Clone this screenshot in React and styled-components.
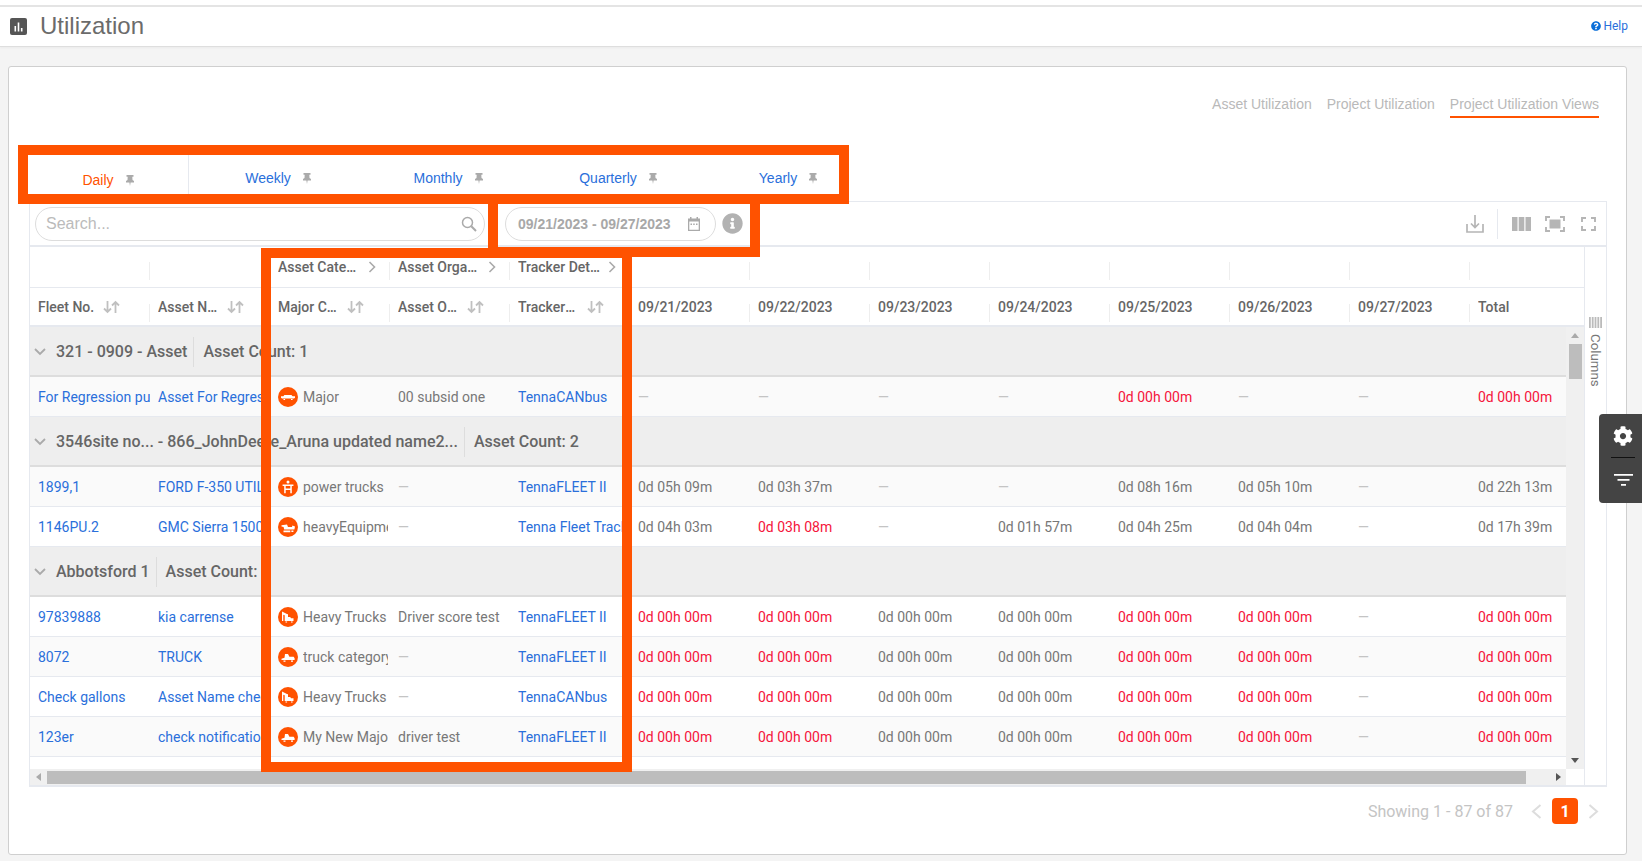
import React from 'react'
import styled, { createGlobalStyle } from 'styled-components'
import { FaCog, FaInfoCircle, FaQuestionCircle } from 'react-icons/fa'

const ORANGE = '#ff5200'
const BLUE = '#2a6fdb'
const LINE = '#e6e9ef'
const ARIAL = '"Liberation Sans", Arial, sans-serif'

const leafCols = [
  { label: 'Fleet No.', sort: true },
  { label: 'Asset Name', sort: true },
  { label: 'Major Category', sort: true },
  { label: 'Asset Organization', sort: true },
  { label: 'Tracker Type', sort: true },
  { label: '09/21/2023' },
  { label: '09/22/2023' },
  { label: '09/23/2023' },
  { label: '09/24/2023' },
  { label: '09/25/2023' },
  { label: '09/26/2023' },
  { label: '09/27/2023' },
  { label: 'Total', last: true }
]

const groupCols = ['', '', 'Asset Category', 'Asset Organization', 'Tracker Details', '', '', '', '', '', '', '', '']

const R = '0d 00h 00m'
const D = '—'

const groups = [
  {
    id: 'a',
    name: '321 - 0909 - Asset',
    count: 'Asset Count: 1',
    rows: [
      { fleet: 'For Regression purpose', name: 'Asset For Regression', icon: 'major', cat: 'Major', org: '00 subsid one', tracker: 'TennaCANbus', alt: true,
        times: [D, D, D, D, R, D, D, R], red: [4, 7] }
    ]
  },
  {
    id: 'b',
    name: '3546site no... - 866_JohnDeere_Aruna updated name2...',
    count: 'Asset Count: 2',
    rows: [
      { fleet: '1899,1', name: 'FORD F-350 UTILITY', icon: 'power', cat: 'power trucks', org: D, tracker: 'TennaFLEET II', alt: true,
        times: ['0d 05h 09m', '0d 03h 37m', D, D, '0d 08h 16m', '0d 05h 10m', D, '0d 22h 13m'], red: [] },
      { fleet: '1146PU.2', name: 'GMC Sierra 1500', icon: 'equip', cat: 'heavyEquipment', org: D, tracker: 'Tenna Fleet Tracker',
        times: ['0d 04h 03m', '0d 03h 08m', D, '0d 01h 57m', '0d 04h 25m', '0d 04h 04m', D, '0d 17h 39m'], red: [1] }
    ]
  },
  {
    id: 'c',
    name: 'Abbotsford 1',
    count: 'Asset Count: 4',
    rows: [
      { fleet: '97839888', name: 'kia carrense', icon: 'heavy', cat: 'Heavy Trucks', org: 'Driver score test', tracker: 'TennaFLEET II',
        times: [R, R, R, R, R, R, D, R], red: [0, 1, 4, 5, 7] },
      { fleet: '8072', name: 'TRUCK', icon: 'tow', cat: 'truck category', org: D, tracker: 'TennaFLEET II', alt: true,
        times: [R, R, R, R, R, R, D, R], red: [0, 1, 4, 5, 7] },
      { fleet: 'Check gallons', name: 'Asset Name check', icon: 'heavy', cat: 'Heavy Trucks', org: D, tracker: 'TennaCANbus',
        times: [R, R, R, R, R, R, D, R], red: [0, 1, 4, 5, 7] },
      { fleet: '123er', name: 'check notification', icon: 'tow', cat: 'My New Major', org: 'driver test', tracker: 'TennaFLEET II', alt: true,
        times: [R, R, R, R, R, R, D, R], red: [0, 1, 4, 5, 7] }
    ]
  }
]

const vehicleShapes = {
  major: <path d="M3 9.200h2.400l1-1.200h7l1.200 1.200H17v1.600l-1 .7H4l-1-.7zM5.500 12h1.600v.9H5.500zM13 12h1.600v.9H13z" />,
  power: <path d="M10 3.600a1.500 1.500 0 1 1 0 3 1.500 1.500 0 0 1 0-3zM4.600 7.600h10.800v1.500h-1.600v7.200h-1.500v-3.200H7.700v3.200H6.200V9.100H4.600zM7.700 9.100v2.400h4.600V9.100z" />,
  equip: <path d="M3.500 8.200l5.500-.6 1 2.400h4l.4-1.600 2.600 1-.6 3H6.200L5.600 10l-2.100-.6zM5.500 13.400h6.800v1.800H5.500zM13.400 13.600h2v1.400h-2z" />,
  heavy: <path d="M4 4.600l5 2.400 1 .3V10h2.200l.8 1.200h2.500V14H6.700V8.300l-1.400-.6V14H4zM7.500 14.400h1.600v1H7.500zM13 14.400h1.600v1H13z" />,
  tow: <path d="M7 7h3l1.400 2.800h4.200l1 1.400v1.800H3.500v-1.300l3-.9zM5.500 13.400h2v1.400h-2zM13 13.400h2v1.400h-2z" />
}

const Vehicle = ({ kind }) => (
  <Avatar viewBox="0 0 20 20">
    <circle cx="10" cy="10" r="10" fill={ORANGE} />
    <g fill="#fff">{vehicleShapes[kind]}</g>
  </Avatar>
)

const Pin = () => (
  <PinIcon viewBox="0 0 8 11">
    <path d="M0.500 0h7v1.800H6.300L6.500 5 8 6v1.400H4.600L4 11l-.6-3.600H0V6l1.500-1 .2-3.200H.5z" />
  </PinIcon>
)

const SortArrows = () => (
  <SortIcon viewBox="0 0 17 14">
    <path d="M4.500 1v11M1 8.500L4.500 12 8 8.500M12.500 13V2M9 5.500L12.500 2 16 5.500" />
  </SortIcon>
)

const HeaderRows = () => (
  <>
    <GroupHeadRow>
      {groupCols.map((label, i) => (
        <GroupHeadCell key={i} $noSep={i === groupCols.length - 1}>
          {label && <GroupHeadLabel>{label}</GroupHeadLabel>}
          {label && (
            <HeadChevron viewBox="0 0 8 12">
              <path d="M1.500 1l5 5-5 5" />
            </HeadChevron>
          )}
        </GroupHeadCell>
      ))}
    </GroupHeadRow>
    <LeafHeadRow>
      {leafCols.map((col) => (
        <LeafHeadCell key={col.label} $noSep={col.last}>
          <LeafLabel $sort={col.sort}>{col.label}</LeafLabel>
          {col.sort && <SortArrows />}
        </LeafHeadCell>
      ))}
    </LeafHeadRow>
  </>
)

const AssetRow = ({ row }) => (
  <Row $alt={row.alt}>
    <LinkCell>{row.fleet}</LinkCell>
    <LinkCell>{row.name}</LinkCell>
    <Cell>
      <Vehicle kind={row.icon} />
      <CategoryName>{row.cat}</CategoryName>
    </Cell>
    <Cell $dash={row.org === D}>{row.org}</Cell>
    <LinkCell>{row.tracker}</LinkCell>
    {row.times.map((t, i) => (
      <Cell key={i} $dash={t === D} $red={row.red.includes(i)}>{t}</Cell>
    ))}
  </Row>
)

const App = () => (
  <Page>
    <GlobalStyle />
    <TopBar>
      <TitleIcon viewBox="0 0 17 17">
        <rect width="17" height="17" rx="2" fill="#555" />
        <path d="M4.500 8h1.600v5.500H4.500zM7.700 4.500h1.600v9H7.700zM10.900 10h1.600v3.500h-1.600z" fill="#fff" />
      </TitleIcon>
      <Title>Utilization</Title>
      <Help><FaQuestionCircle size={10} />Help</Help>
    </TopBar>

    <Panel>
      <ViewTabs>
        <ViewTab>Asset Utilization</ViewTab>
        <ViewTab>Project Utilization</ViewTab>
        <ViewTab $active>Project Utilization Views</ViewTab>
      </ViewTabs>

      <PeriodTabs>
        <PeriodTab $active>Daily<Pin /></PeriodTab>
        <PeriodTab>Weekly<Pin /></PeriodTab>
        <PeriodTab>Monthly<Pin /></PeriodTab>
        <PeriodTab>Quarterly<Pin /></PeriodTab>
        <PeriodTab>Yearly<Pin /></PeriodTab>
      </PeriodTabs>

      <TableCard>
        <Toolbar>
          <SearchBox>
            <SearchText>Search...</SearchText>
            <ToolIcon viewBox="0 0 16 16" width="16" height="16">
              <circle cx="6.500" cy="6.500" r="5" fill="none" stroke="#aaa" strokeWidth="1.500" />
              <path d="M10.300 10.300L15 15" fill="none" stroke="#aaa" strokeWidth="2" />
            </ToolIcon>
          </SearchBox>
          <DateBox>
            <DateText>09/21/2023 - 09/27/2023</DateText>
            <ToolIcon viewBox="0 0 14 14" width="14" height="14">
              <path fill="#aaa" d="M1 1.500h2V0h1.500v1.500h5V0H11v1.500h2V14H1zm1.300 3v8.200h9.400V4.500z" />
              <path fill="#aaa" d="M3.500 6.500h1.500V8H3.500zM6.200 6.500h1.500V8H6.200zM9 6.500h1.500V8H9z" />
            </ToolIcon>
          </DateBox>
          <InfoButton><FaInfoCircle size={21} /></InfoButton>
          <ToolbarRight>
            <ToolIcon viewBox="0 0 18 18" width="18" height="18">
              <path fill="none" stroke="#b5b5b5" strokeWidth="1.700" d="M1 9v8h16V9M9 0v12M5 8.500l4 4 4-4" />
            </ToolIcon>
            <ToolDivider />
            <ToolIcon $ml={14} viewBox="0 0 19 14" width="19" height="14">
              <path fill="#b5b5b5" d="M0 0h5.500v14H0zM6.700 0h5.600v14H6.700zM13.500 0H19v14h-5.500z" />
            </ToolIcon>
            <ToolIcon $ml={14} viewBox="0 0 20 16" width="20" height="16">
              <path fill="none" stroke="#b5b5b5" strokeWidth="1.900" d="M1 5V1h4M15 1h4v4M19 11v4h-4M5 15H1v-4" />
              <path fill="#b5b5b5" d="M4.500 3.500h11v9h-11z" />
            </ToolIcon>
            <ToolIcon $ml={16} viewBox="0 0 15 14" width="15" height="14">
              <path fill="none" stroke="#b5b5b5" strokeWidth="1.900" d="M1 5V1h4M10 1h4v4M14 9v4h-4M5 13H1V9" />
            </ToolIcon>
          </ToolbarRight>
        </Toolbar>

        <TableArea>
          <GridArea>
            <HeaderRows />
            <BodyWrap>
              <Viewport>
                {groups.map((g) => (
                  <React.Fragment key={g.id}>
                    <GroupRow>
                      <GroupCaret viewBox="0 0 12 8">
                        <path d="M1 1l5 5 5-5" />
                      </GroupCaret>
                      <GroupName>{g.name}</GroupName>
                      <GroupSep />
                      <GroupName>{g.count}</GroupName>
                    </GroupRow>
                    {g.rows.map((row) => <AssetRow key={row.fleet} row={row} />)}
                  </React.Fragment>
                ))}
              </Viewport>
              <VScroll>
                <ArrowUp />
                <VThumb />
                <VSpacer />
                <ArrowDown />
              </VScroll>
            </BodyWrap>
            <HScroll>
              <ArrowLeft />
              <HThumb />
              <ArrowRight />
            </HScroll>
          </GridArea>
          <SideBar>
            <SideBars viewBox="0 0 13 11">
              <path d="M0 0h1.800v11H0zM2.800 0h1.800v11H2.800zM5.600 0h1.800v11H5.600zM8.400 0h1.800v11H8.400zM11.200 0H13v11h-1.800z" />
            </SideBars>
            <SideLabel>Columns</SideLabel>
          </SideBar>
        </TableArea>
      </TableCard>

      <Footer>
        <Showing>Showing 1 - 87 of 87</Showing>
        <PageChevron viewBox="0 0 11 15"><path d="M9.500 1L2 7.500 9.500 14" /></PageChevron>
        <PageNumber>1</PageNumber>
        <PageChevron viewBox="0 0 11 15"><path d="M1.500 1L9 7.500 1.500 14" /></PageChevron>
      </Footer>
    </Panel>

    <Highlight $x={18} $y={145} $w={831} $h={59} />
    <Highlight $x={488} $y={194} $w={272} $h={63} />
    <Highlight $x={261} $y={248} $w={371} $h={524} />

    <FloatMenu>
      <FaCog size={20} color="#fff" />
      <FloatLine />
      <FloatFilter viewBox="0 0 19 12">
        <path d="M0 0h19v1.800H0zM3.500 5h12v1.800h-12zM7 10h5v1.800H7z" />
      </FloatFilter>
    </FloatMenu>
  </Page>
)

const GlobalStyle = createGlobalStyle`
  html, body {
    margin: 0;
    padding: 0;
    background: #f4f4f4;
    font-family: Roboto, "Liberation Sans", sans-serif;
  }
  * {
    box-sizing: border-box;
  }
`
const Page = styled.div`
  position: relative;
  width: 1642px;
  height: 861px;
  overflow: hidden;
  background: #f4f4f4;
`
const TopBar = styled.div`
  display: flex;
  align-items: center;
  height: 47px;
  padding: 6px 14px 0 10px;
  background: linear-gradient(#fff 5px, #e4e4e4 5px, #e4e4e4 7px, #fff 7px);
  border-bottom: 1px solid #dedede;
  box-shadow: 0 1px 2px rgba(0, 0, 0, 0.04);
`
const TitleIcon = styled.svg`
  width: 17px;
  height: 17px;
`
const Title = styled.div`
  margin-left: 13px;
  font-family: ${ARIAL};
  font-size: 24px;
  color: #6b6b6b;
`
const Help = styled.div`
  display: flex;
  align-items: center;
  gap: 2px;
  margin-left: auto;
  font-size: 12px;
  color: ${BLUE};
  svg {
    color: #0a6ed8;
  }
`
const Panel = styled.div`
  width: 1619px;
  height: 789px;
  margin: 19px 0 0 8px;
  background: #fff;
  border: 1px solid #cfcfcf;
  border-radius: 3px;
`
const ViewTabs = styled.div`
  display: flex;
  justify-content: flex-end;
  gap: 15px;
  margin-top: 27px;
  padding-right: 27px;
`
const ViewTab = styled.div`
  height: 24px;
  line-height: 20px;
  font-family: ${ARIAL};
  font-size: 14px;
  color: #b9b9b9;
  border-bottom: 2px solid ${({ $active }) => ($active ? ORANGE : 'transparent')};
`
const PeriodTabs = styled.div`
  display: flex;
  height: 40px;
  margin: 37px 0 0 19px;
`
const PeriodTab = styled.div`
  display: flex;
  flex: none;
  align-items: center;
  justify-content: center;
  gap: 12px;
  width: ${({ $active }) => ($active ? '161px' : '170px')};
  padding-top: ${({ $active }) => ($active ? '10px' : '6px')};
  font-family: ${ARIAL};
  font-size: 14px;
  color: ${({ $active }) => ($active ? ORANGE : BLUE)};
  border-right: ${({ $active }) => ($active ? '1px solid #e6e9ef' : 'none')};
  &:nth-child(2) {
    margin-left: 4px;
  }
`
const PinIcon = styled.svg`
  width: 8px;
  height: 11px;
  fill: #aaa;
`
const TableCard = styled.div`
  width: 1578px;
  height: 586px;
  margin: 6px 0 0 20px;
  border: 1px solid ${LINE};
  border-bottom-width: 2px;
`
const Toolbar = styled.div`
  display: flex;
  align-items: center;
  height: 45px;
  padding: 0 10px 0 5px;
  border-bottom: 2px solid ${LINE};
`
const SearchBox = styled.div`
  display: flex;
  align-items: center;
  justify-content: space-between;
  width: 450px;
  height: 34px;
  padding: 0 7px 0 10px;
  border: 1px solid #ddd;
  border-radius: 17px;
`
const SearchText = styled.span`
  font-family: ${ARIAL};
  font-size: 16px;
  color: #bbb;
`
const ToolIcon = styled.svg`
  display: block;
  flex: none;
  margin-left: ${({ $ml }) => $ml || 0}px;
`
const DateBox = styled.div`
  display: flex;
  align-items: center;
  justify-content: space-between;
  width: 211px;
  height: 34px;
  margin-left: 20px;
  padding: 0 14px 0 12px;
  border: 1px solid #ddd;
  border-radius: 17px;
`
const DateText = styled.span`
  font-family: ${ARIAL};
  font-size: 14px;
  font-weight: 700;
  color: #a8a8a8;
`
const InfoButton = styled.div`
  display: flex;
  margin-left: 6px;
  color: #b2b2b2;
`
const ToolbarRight = styled.div`
  display: flex;
  align-items: center;
  margin-left: auto;
`
const ToolDivider = styled.div`
  width: 1px;
  height: 30px;
  margin-left: 13px;
  background: ${LINE};
`
const TableArea = styled.div`
  display: flex;
  height: 538px;
`
const GridArea = styled.div`
  width: 1554px;
  flex: none;
`
const GroupHeadRow = styled.div`
  display: flex;
  height: 41px;
  border-bottom: 1px solid ${LINE};
`
const LeafHeadRow = styled.div`
  display: flex;
  height: 39px;
  border-bottom: 2px solid ${LINE};
`
const HeadCell = styled.div`
  display: flex;
  flex: none;
  align-items: center;
  width: 120px;
  padding-left: 8px;
  font-size: 14px;
  font-weight: 500;
  color: #666;
  &::after {
    content: '';
    flex: none;
    align-self: flex-end;
    width: 1px;
    height: 18px;
    margin-left: auto;
    margin-bottom: 3px;
    background: ${({ $noSep }) => ($noSep ? 'transparent' : '#eee')};
  }
`
const GroupHeadCell = styled(HeadCell)`
  padding-bottom: 1px;
  &::after {
    margin-bottom: 6px;
  }
`
const LeafHeadCell = styled(HeadCell)``
const GroupHeadLabel = styled.span`
  width: 84px;
  overflow: hidden;
  white-space: nowrap;
  text-overflow: ellipsis;
`
const HeadChevron = styled.svg`
  flex: none;
  width: 8px;
  height: 12px;
  margin-left: 6px;
  fill: none;
  stroke: #aaa;
  stroke-width: 1.600;
`
const LeafLabel = styled.span`
  max-width: ${({ $sort }) => ($sort ? '60px' : '90px')};
  overflow: hidden;
  white-space: nowrap;
  text-overflow: ellipsis;
`
const SortIcon = styled.svg`
  flex: none;
  width: 17px;
  height: 14px;
  margin-left: 9px;
  fill: none;
  stroke: #c0c0c0;
  stroke-width: 1.800;
`
const BodyWrap = styled.div`
  display: flex;
  height: 442px;
`
const Viewport = styled.div`
  width: 1536px;
  overflow: hidden;
`
const GroupRow = styled.div`
  display: flex;
  align-items: center;
  height: 50px;
  padding: 1px 0 0 4px;
  background: #eee;
  border-bottom: 2px solid #ddd;
`
const GroupCaret = styled.svg`
  width: 12px;
  height: 8px;
  margin-right: 10px;
  fill: none;
  stroke: #aaa;
  stroke-width: 1.800;
`
const GroupName = styled.span`
  font-size: 16px;
  font-weight: 500;
  color: #666;
  white-space: nowrap;
`
const GroupSep = styled.span`
  width: 1px;
  height: 30px;
  margin: 0 9px 0 6px;
  background: #ddd;
`
const Row = styled.div`
  display: flex;
  height: 40px;
  background: ${({ $alt }) => ($alt ? '#fafafa' : '#fff')};
  border-bottom: 1px solid ${LINE};
`
const Cell = styled.div`
  display: flex;
  flex: none;
  align-items: center;
  width: 120px;
  padding-left: 8px;
  overflow: hidden;
  white-space: nowrap;
  font-size: 14px;
  color: ${({ $dash, $red }) => ($red ? '#f5143a' : $dash ? '#c4c4c4' : '#777')};
`
const LinkCell = styled(Cell)`
  color: ${BLUE};
`
const Avatar = styled.svg`
  flex: none;
  width: 20px;
  height: 20px;
  margin-right: 5px;
`
const CategoryName = styled.span`
  width: 85px;
  overflow: hidden;
  white-space: nowrap;
`
const VScroll = styled.div`
  display: flex;
  flex-direction: column;
  align-items: center;
  width: 18px;
  padding: 6px 0;
  background: #f0f0f0;
`
const ArrowUp = styled.div`
  width: 0;
  height: 0;
  margin-bottom: 6px;
  border: 4px solid transparent;
  border-top: 0;
  border-bottom: 5px solid #aaa;
`
const ArrowDown = styled.div`
  width: 0;
  height: 0;
  border: 4px solid transparent;
  border-bottom: 0;
  border-top: 5px solid #555;
`
const VThumb = styled.div`
  width: 13px;
  height: 35px;
  background: #bdbdbd;
`
const VSpacer = styled.div`
  flex: 1;
`
const HScroll = styled.div`
  display: flex;
  align-items: center;
  width: 1536px;
  height: 16px;
  background: #f0f0f0;
`
const ArrowLeft = styled.div`
  width: 0;
  height: 0;
  margin: 0 6px 0 6px;
  border: 4px solid transparent;
  border-left: 0;
  border-right: 5px solid #aaa;
`
const ArrowRight = styled.div`
  width: 0;
  height: 0;
  margin-left: 30px;
  border: 4px solid transparent;
  border-right: 0;
  border-left: 5px solid #555;
`
const HThumb = styled.div`
  width: 1479px;
  height: 13px;
  background: #bdbdbd;
`
const SideBar = styled.div`
  display: flex;
  flex: 1;
  flex-direction: column;
  align-items: center;
  padding-top: 70px;
  border-left: 1px solid ${LINE};
`
const SideBars = styled.svg`
  width: 13px;
  height: 11px;
  fill: #bbb;
`
const SideLabel = styled.div`
  margin-top: 6px;
  writing-mode: vertical-rl;
  font-size: 13.300px;
  color: #777;
`
const Footer = styled.div`
  display: flex;
  align-items: center;
  justify-content: flex-end;
  margin-top: 11px;
  padding-right: 27px;
`
const Showing = styled.div`
  margin-right: 18px;
  font-size: 16px;
  color: #c4c4c4;
`
const PageChevron = styled.svg`
  width: 11px;
  height: 15px;
  fill: none;
  stroke: #ddd;
  stroke-width: 2;
`
const PageNumber = styled.div`
  display: flex;
  align-items: center;
  justify-content: center;
  width: 26px;
  height: 26px;
  margin: 0 10px;
  font-size: 16px;
  font-weight: 700;
  color: #fff;
  background: ${ORANGE};
  border-radius: 4px;
`
const Highlight = styled.div`
  position: absolute;
  left: ${({ $x }) => $x}px;
  top: ${({ $y }) => $y}px;
  width: ${({ $w }) => $w}px;
  height: ${({ $h }) => $h}px;
  border: 10px solid ${ORANGE};
  pointer-events: none;
`
const FloatMenu = styled.div`
  position: absolute;
  top: 414px;
  right: 0;
  display: flex;
  flex-direction: column;
  align-items: center;
  width: 43px;
  height: 89px;
  padding: 12px 0 0 5px;
  background: #444;
  border-radius: 4px 0 0 4px;
`
const FloatLine = styled.div`
  width: 24px;
  height: 1px;
  margin: 11px 0 16px;
  background: #111;
`
const FloatFilter = styled.svg`
  width: 19px;
  height: 12px;
  fill: #fff;
`

export default App
